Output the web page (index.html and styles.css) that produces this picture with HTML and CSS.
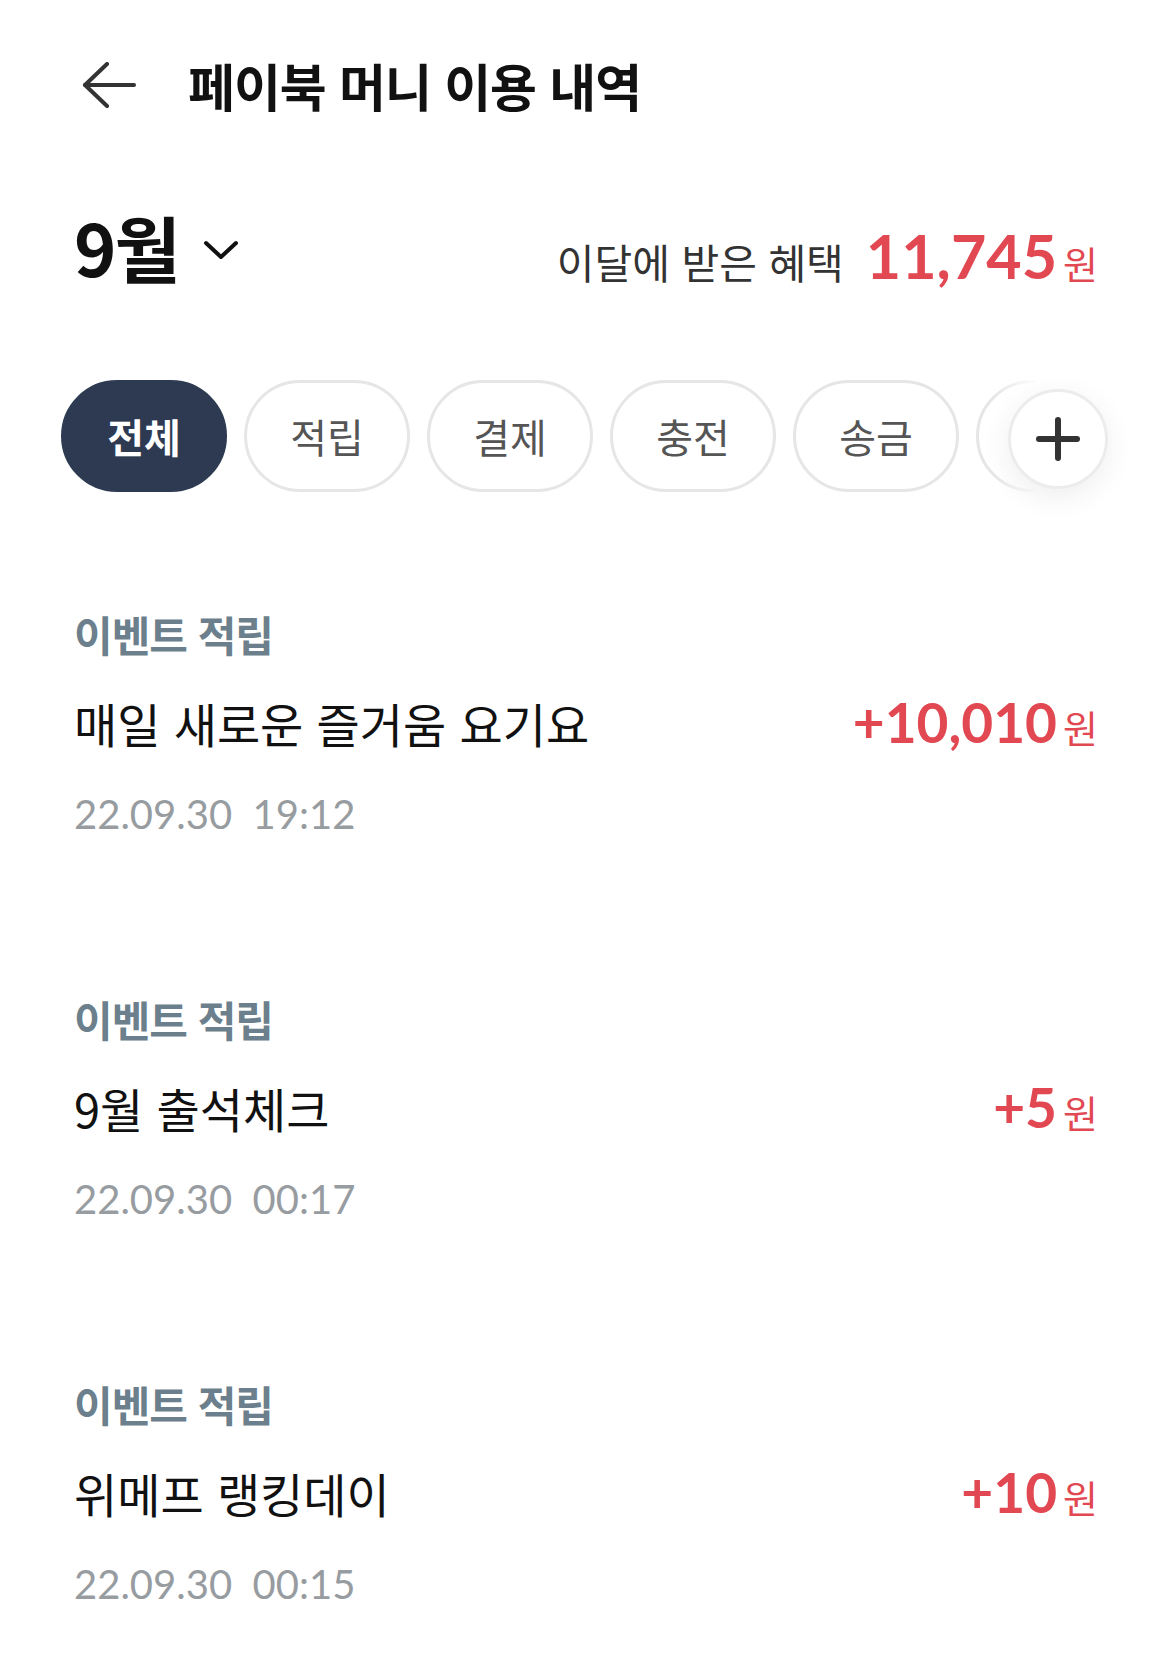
FILE: index.html
```html
<!DOCTYPE html>
<html lang="ko">
<head>
    <meta charset="UTF-8">
    <title>페이북 머니 이용 내역</title>
    <link rel="stylesheet" href="styles.css">
</head>
<body>
    <div class="page">
        <header class="header">
            <button class="back" aria-label="뒤로">
                <svg width="56" height="46" viewBox="0 0 56 46" fill="none" stroke="#333" stroke-width="4" stroke-linecap="round" stroke-linejoin="round">
                    <path d="M53 23H4"/>
                    <path d="M26 2L4 23L26 44"/>
                </svg>
            </button>
            <h1>페이북 머니 이용 내역</h1>
        </header>

        <div class="month-row">
            <button class="month">
                <span>9월</span>
                <svg class="caret" width="36" height="22" viewBox="0 0 36 22" fill="none" stroke="#111" stroke-width="4" stroke-linecap="round" stroke-linejoin="round">
                    <path d="M3 4L18 18L33 4"/>
                </svg>
            </button>
            <div class="benefit">
                <span class="benefit-label">이달에 받은 혜택</span>
                <span class="benefit-amount">11,745</span>
                <span class="won">원</span>
            </div>
        </div>

        <div class="chips-wrap">
            <div class="chips">
                <button class="chip active">전체</button>
                <button class="chip">적립</button>
                <button class="chip">결제</button>
                <button class="chip">충전</button>
                <button class="chip">송금</button>
                <button class="chip">출금</button>
            </div>
            <div class="chips-more">
                <button class="plus" aria-label="더보기">
                    <svg width="46" height="46" viewBox="0 0 46 46" fill="none" stroke="#333" stroke-width="6" stroke-linecap="round">
                        <path d="M23 4V42"/>
                        <path d="M4 23H42"/>
                    </svg>
                </button>
            </div>
        </div>

        <ul class="list">
            <li class="item">
                <div class="item-type">이벤트 적립</div>
                <div class="item-row">
                    <span class="item-name">매일 새로운 즐거움 요기요</span>
                    <span class="item-amount"><b>+10,010</b><span class="won">원</span></span>
                </div>
                <div class="item-date">22.09.30&nbsp; 19:12</div>
            </li>
            <li class="item">
                <div class="item-type">이벤트 적립</div>
                <div class="item-row">
                    <span class="item-name">9월 출석체크</span>
                    <span class="item-amount"><b>+5</b><span class="won">원</span></span>
                </div>
                <div class="item-date">22.09.30&nbsp; 00:17</div>
            </li>
            <li class="item">
                <div class="item-type">이벤트 적립</div>
                <div class="item-row">
                    <span class="item-name">위메프 랭킹데이</span>
                    <span class="item-amount"><b>+10</b><span class="won">원</span></span>
                </div>
                <div class="item-date">22.09.30&nbsp; 00:15</div>
            </li>
        </ul>
    </div>
</body>
</html>
```

FILE: styles.css
```css
body {
    margin: 0;
    background: #fff;
    font-family: "Noto Sans CJK KR", "Noto Sans", sans-serif;
    color: #111;
}

button {
    font-family: inherit;
    background: none;
    border: none;
    padding: 0;
    cursor: pointer;
}

.page {
    padding: 0 72px 0 74px;
    overflow: hidden;
}

/* header */
.header {
    display: flex;
    align-items: center;
    height: 170px;
}

.back {
    display: flex;
    margin-left: 7px;
    margin-right: 51px;
}

.header h1 {
    margin: 0;
    font-size: 51px;
    font-weight: 700;
    letter-spacing: -1px;
    line-height: 1;
}

/* month + benefit */
.month-row {
    display: flex;
    align-items: center;
    justify-content: space-between;
    height: 160px;
}

.month {
    display: flex;
    align-items: center;
    gap: 24px;
    margin-bottom: 10px;
    font-size: 72px;
    font-weight: 700;
    color: #111;
    letter-spacing: -2px;
}

.caret {
    margin-top: 10px;
}

.benefit {
    display: flex;
    align-items: baseline;
    margin-top: 10px;
}

.benefit-label {
    font-size: 41px;
    color: #333;
    margin-right: 22px;
}

.benefit-amount {
    font-family: "Lato", sans-serif;
    font-size: 61px;
    font-weight: 700;
    color: #e14852;
}

.won {
    font-size: 38px;
    color: #e14852;
    margin-left: 6px;
}

/* filter chips */
.chips-wrap {
    position: relative;
    margin-top: 50px;
    margin-left: -13px;
    margin-right: -72px;
}

.chips {
    display: flex;
    gap: 17px;
}

.chip {
    flex: 0 0 auto;
    width: 166px;
    height: 112px;
    border: 3px solid #e6e6e6;
    border-radius: 56px;
    font-size: 40px;
    color: #555;
    background: #fff;
}

.chip.active {
    background: #2d3a52;
    border-color: #2d3a52;
    color: #fff;
    font-weight: 700;
}

.chips-more {
    position: absolute;
    top: 0;
    right: 0;
    bottom: 0;
    width: 176px;
    display: flex;
    align-items: center;
    background: linear-gradient(to right, rgba(255, 255, 255, 0) 0, #fff 25%);
}

.plus {
    display: flex;
    align-items: center;
    justify-content: center;
    width: 100px;
    height: 100px;
    margin-left: 14px;
    margin-top: 6px;
    border: 3px solid #ececec;
    border-radius: 50%;
    background: #fff;
    box-shadow: 0 8px 30px rgba(0, 0, 0, 0.07);
    box-sizing: border-box;
}

/* list */
.list {
    list-style: none;
    margin: 0;
    padding: 117px 0 0;
}

.item {
    padding-bottom: 155px;
}

.item:last-child {
    padding-bottom: 0;
}

.item-type {
    font-size: 42px;
    font-weight: 700;
    color: #6c7f8c;
    line-height: 50px;
    letter-spacing: -1px;
}

.item-row {
    display: flex;
    justify-content: space-between;
    align-items: baseline;
    margin-top: 33px;
    line-height: 60px;
}

.item-name {
    font-size: 47px;
    color: #111;
}

.item-amount b {
    font-family: "Lato", sans-serif;
    font-size: 55px;
    font-weight: 700;
    color: #e14852;
}

.item-date {
    margin-top: 23px;
    font-family: "Lato", sans-serif;
    font-size: 40px;
    line-height: 50px;
    color: #979ca1;
}
```
